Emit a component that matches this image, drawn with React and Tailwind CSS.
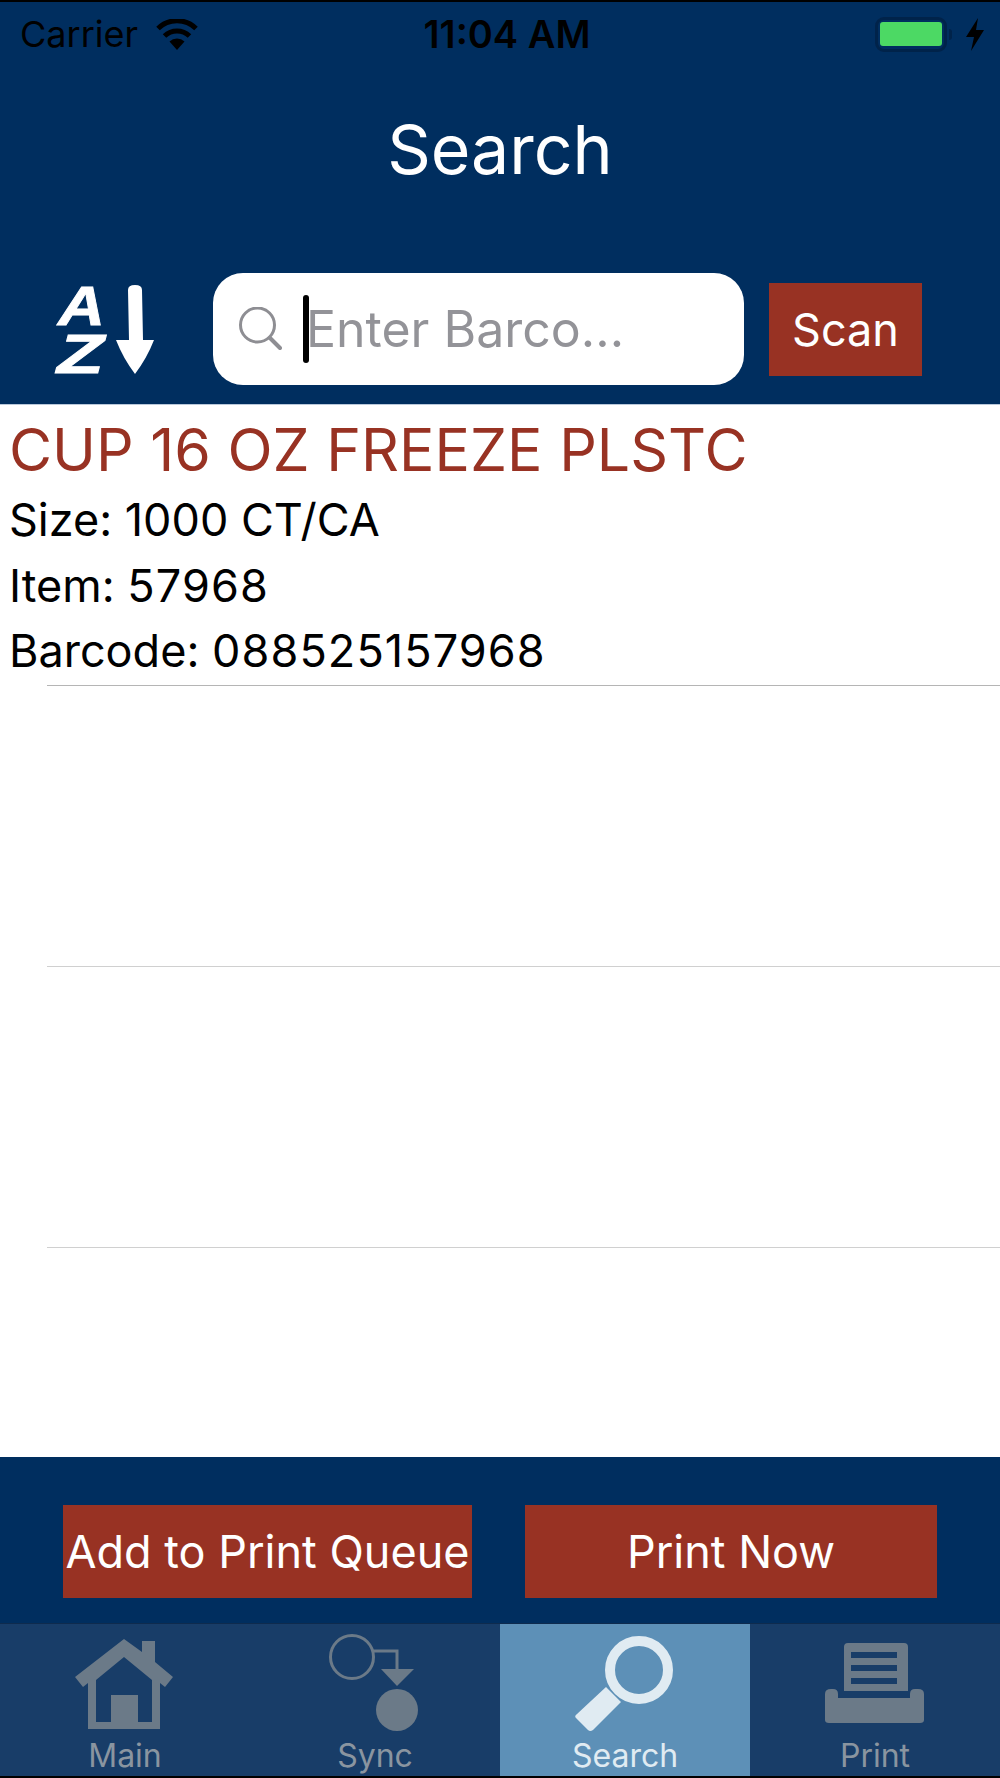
import React from "react";

const font = { fontFamily: "Inter, 'Noto Sans', sans-serif" };

function Wifi() {
  return (
    <svg width="44" height="31" viewBox="0 0 44 31" className="ml-[17px]">
      <path d="M22 31 L14.5 22.5 A11 11 0 0 1 29.5 22.5 Z" fill="#000" />
      <path d="M9.5 17 A18 18 0 0 1 34.5 17" fill="none" stroke="#000" strokeWidth="5" />
      <path d="M3 9.5 A27 27 0 0 1 41 9.5" fill="none" stroke="#000" strokeWidth="5" />
    </svg>
  );
}

function Battery() {
  return (
    <div className="flex items-center">
      <div className="flex h-[35px] w-[72px] items-center justify-center rounded-[9px] border-[3px] border-[#00234a]">
        <div className="h-[24px] w-[62px] rounded-[3px] bg-[#4cd964]" />
      </div>
      <div className="ml-[2px] h-[11px] w-[3px] rounded-r-full bg-[#00234a]" />
      <svg width="20" height="33" viewBox="0 0 20 33" className="ml-[13px]">
        <path d="M13 0 L1 19 H9 L6 33 L19 12 H11 Z" fill="#000" />
      </svg>
    </div>
  );
}

function SortIcon() {
  return (
    <svg width="100" height="90" viewBox="0 0 100 90" className="shrink-0 overflow-visible">
      <text x="3" y="41" fontFamily="Liberation Sans" fontWeight="bold" fontStyle="italic" fontSize="55" fill="#fff" stroke="#fff" strokeWidth="0.8" textLength="47" lengthAdjust="spacingAndGlyphs">A</text>
      <text x="2" y="89" fontFamily="Liberation Sans" fontWeight="bold" fontStyle="italic" fontSize="55" fill="#fff" stroke="#fff" strokeWidth="0.8" textLength="47" lengthAdjust="spacingAndGlyphs">Z</text>
      <path d="M73 6 Q73 1 80 1 Q87 1 87 6 L88 56 H99 Q92 74 80 90 Q68 74 61 56 H74 Z" fill="#fff" />
    </svg>
  );
}

function SearchGlass() {
  return (
    <svg width="44" height="44" viewBox="0 0 44 44" className="shrink-0">
      <circle cx="19.5" cy="18" r="17" fill="none" stroke="#8e8e93" strokeWidth="3" />
      <path d="M32 31 L42 41" stroke="#8e8e93" strokeWidth="4" strokeLinecap="round" />
    </svg>
  );
}

function HomeIcon({ color }) {
  return (
    <svg width="100" height="92" viewBox="0 0 100 92">
      <path
        fill={color}
        fillRule="evenodd"
        d="M49 0 L67 13 V2 H80 V23 L98 38 L90 48 L85 44 V90 H13 V44 L8 48 L0 38 Z M49 18 L21 41 V83 H36 V56 H63 V83 H77 V41 Z"
      />
    </svg>
  );
}

function SyncIcon({ color }) {
  return (
    <svg width="90" height="100" viewBox="0 0 90 100" className="-translate-x-[1px]">
      <circle cx="23" cy="23" r="21.5" fill="none" stroke={color} strokeWidth="3" />
      <path d="M44 17 H68 V36" fill="none" stroke={color} strokeWidth="3" />
      <path d="M52 35 H85 L68 52 Z" fill={color} />
      <circle cx="68" cy="76" r="21" fill={color} />
    </svg>
  );
}

function GlassIcon({ color }) {
  return (
    <svg width="100" height="100" viewBox="0 0 100 100">
      <circle cx="64" cy="36" r="29" fill="none" stroke={color} strokeWidth="10" />
      <path d="M31 53 L46 68 L18 96 Q15 98 13 96 L1 84 Q-1 82 2 80 Z" fill={color} />
    </svg>
  );
}

function PrintIcon({ color }) {
  return (
    <svg width="100" height="82" viewBox="0 0 100 82">
      <path
        fill={color}
        fillRule="evenodd"
        d="M23 0 H79 Q83 0 83 4 V48 H19 V4 Q19 0 23 0 Z M26 9 V15 H72 V9 Z M26 22 V28 H72 V22 Z M26 35 V41 H72 V35 Z"
      />
      <path
        fill={color}
        d="M6 46 H8 Q13 46 13 51 V55 H85 V51 Q85 46 90 46 H93 Q99 46 99 51 V77 Q99 80 95 80 H4 Q0 80 0 77 V51 Q0 46 6 46 Z"
      />
    </svg>
  );
}

const tabs = [
  { label: "Main", Icon: HomeIcon, h: "pt-[15px]" },
  { label: "Sync", Icon: SyncIcon, h: "pt-[10px]" },
  { label: "Search", Icon: GlassIcon, active: true, h: "pt-[10px]" },
  { label: "Print", Icon: PrintIcon, h: "pt-[19px]" },
];

function Tab({ label, Icon, active, h }) {
  return (
    <div className={`relative flex flex-1 flex-col items-center ${h} ${active ? "bg-[#5d90b7]" : ""}`}>
      <Icon color={active ? "#e0ebf2" : "#6b7a88"} />
      <span className={`absolute bottom-[3px] text-[32px] leading-[34px] ${active ? "text-[#e0ebf2]" : "text-[#8a95a0]"}`}>
        {label}
      </span>
    </div>
  );
}

export default function App() {
  return (
    <div style={font} className="flex h-[1778px] w-[1000px] flex-col overflow-hidden bg-white">
      {/* header */}
      <div className="h-[405px] shrink-0 border-t-2 border-b border-black border-b-[#b9c8da] bg-[#002e5f]">
        <div className="flex h-[62px] items-center justify-between pt-[2px] pr-[15px] pl-[20px]">
          <div className="flex w-[309px] items-center text-[36px] leading-none text-black">
            Carrier
            <Wifi />
          </div>
          <div className="text-[38px] leading-none font-semibold whitespace-nowrap text-black">11:04 AM</div>
          <div className="flex w-[300px] justify-end">
            <Battery />
          </div>
        </div>
        <div className="flex h-[209px] items-center justify-center pb-[39px] text-[68px] leading-none text-white">
          Search
        </div>
        <div className="flex h-[112px] items-center pl-[55px]">
          <SortIcon />
          <div className="ml-[58px] flex h-[112px] w-[531px] items-center rounded-[30px] bg-white pl-[25px]">
            <SearchGlass />
            <div className="ml-[21px] h-[68px] w-[6px] rounded-full bg-black" />
            <span className="-ml-[3px] text-[50px] leading-none text-[#939398]">Enter Barco...</span>
          </div>
          <div className="ml-[25px] flex h-[93px] w-[153px] items-center justify-center bg-[#983223] text-[45px] leading-none text-white">
            Scan
          </div>
        </div>
      </div>

      {/* results */}
      <div className="flex-1">
        <div className="h-[280px] pt-[7px] pl-[9px]">
          <div className="text-[59px] leading-[75px] whitespace-nowrap text-[#983223]">CUP 16 OZ FREEZE PLSTC</div>
          <div className="text-[45px] leading-[65.5px] text-black">Size: 1000 CT/CA</div>
          <div className="text-[45px] leading-[65.5px] text-black">
            Item: <span className="tracking-[1.1px]">57968</span>
          </div>
          <div className="text-[45px] leading-[65.5px] text-black">
            Barcode: <span className="tracking-[1.1px]">088525157968</span>
          </div>
        </div>
        <div className="ml-[47px] border-t border-[#b5b5b5]" />
        <div className="h-[280px]" />
        <div className="ml-[47px] border-t border-[#d0d0d0]" />
        <div className="h-[280px]" />
        <div className="ml-[47px] border-t border-[#d0d0d0]" />
      </div>

      {/* actions */}
      <div className="flex h-[166px] shrink-0 items-start bg-[#002e5f] pt-[48px] pl-[63px]">
        <div className="flex h-[93px] w-[409px] items-center justify-center bg-[#983223] text-[45px] leading-none whitespace-nowrap text-white">
          Add to Print Queue
        </div>
        <div className="ml-[53px] flex h-[93px] w-[412px] items-center justify-center bg-[#983223] text-[45px] leading-none text-white">
          Print Now
        </div>
      </div>

      {/* tab bar */}
      <div className="flex h-[155px] shrink-0 border-t border-b-2 border-t-[#0e2b4e] border-b-black bg-[#183d68]">
        {tabs.map((t) => (
          <Tab key={t.label} {...t} />
        ))}
      </div>
    </div>
  );
}
